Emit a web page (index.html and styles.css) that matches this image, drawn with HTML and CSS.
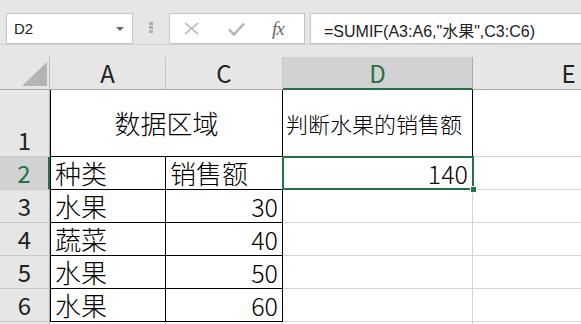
FILE: index.html
```html
<!DOCTYPE html>
<html>
<head>
	<title>SUMIF</title>
	<link rel="stylesheet" href="styles.css">
</head>
<body>
	<div class="toolbar">
		<div class="namebox">
			<span>D2</span>
			<span class="caret"></span>
		</div>
		<div class="grip"><i></i><i></i><i></i></div>
		<div class="fxbox">
			<svg class="ico" width="15" height="13" viewBox="0 0 15 13">
				<path d="M1 1 L14 12 M14 1 L1 12" stroke="#b3b3b3" stroke-width="1.6" fill="none"/>
			</svg>
			<svg class="ico ok" width="17" height="14" viewBox="0 0 17 14">
				<path d="M1 7.5 L6 12.5 L16 1.5" stroke="#b3b3b3" stroke-width="2.4" fill="none"/>
			</svg>
			<span class="fx">fx</span>
		</div>
		<div class="formula">=SUMIF(A3:A6,"水果",C3:C6)</div>
	</div>

	<div class="sheet">
		<div class="gap"></div>

		<div class="corner">
			<svg width="25" height="24" viewBox="0 0 25 24"><polygon points="0,24 25,0 25,24" fill="#b4b4b4"/></svg>
		</div>
		<div class="colhead">A</div>
		<div class="colhead">C</div>
		<div class="colhead sel">D</div>
		<div class="colhead">E</div>

		<div class="rowhead bottom">1</div>
		<div class="cell b first span center big">数据区域</div>
		<div class="cell b small">判断水果的销售额</div>
		<div class="cell"></div>

		<div class="rowhead sel">2</div>
		<div class="cell b first">种类</div>
		<div class="cell b">销售额</div>
		<div class="cell b num active">140
			<div class="pick"><span class="handle"></span></div>
		</div>
		<div class="cell"></div>

		<div class="rowhead">3</div>
		<div class="cell b first">水果</div>
		<div class="cell b num">30</div>
		<div class="cell"></div>
		<div class="cell"></div>

		<div class="rowhead">4</div>
		<div class="cell b first">蔬菜</div>
		<div class="cell b num">40</div>
		<div class="cell"></div>
		<div class="cell"></div>

		<div class="rowhead">5</div>
		<div class="cell b first">水果</div>
		<div class="cell b num">50</div>
		<div class="cell"></div>
		<div class="cell"></div>

		<div class="rowhead">6</div>
		<div class="cell b first">水果</div>
		<div class="cell b num">60</div>
		<div class="cell"></div>
		<div class="cell"></div>

		<div class="rowhead"></div>
		<div class="cell"></div>
		<div class="cell"></div>
		<div class="cell"></div>
		<div class="cell"></div>
	</div>
</body>
</html>
```

FILE: styles.css
```css
body {
	margin: 0;
	width: 581px;
	height: 324px;
	overflow: hidden;
	background-color: #fff;
	font-family: "Noto Sans CJK SC", sans-serif;
	color: #000;
}

/* formula bar */

.toolbar {
	display: flex;
	align-items: flex-start;
	height: 31px;
	padding: 13px 0 0 6px;
	background-color: #e6e6e6;
	border-bottom: 1px solid #d0d0d0;
}

.namebox {
	display: flex;
	align-items: center;
	justify-content: space-between;
	width: 127px;
	height: 31px;
	box-sizing: border-box;
	padding: 0 8px 0 7px;
	background-color: #fff;
	border: 1px solid #c6c6c6;
	font-family: "Liberation Sans", sans-serif;
	font-size: 15px;
	color: #222;
}

.caret {
	width: 0;
	height: 0;
	border-left: 4px solid transparent;
	border-right: 4px solid transparent;
	border-top: 4px solid #666;
}

.grip {
	display: flex;
	flex-direction: column;
	gap: 1px;
	margin: 9px 0 0 16px;
}

.grip i {
	width: 4px;
	height: 3px;
	background-color: #b0b0b0;
}

.fxbox {
	display: flex;
	align-items: center;
	width: 136px;
	height: 31px;
	box-sizing: border-box;
	margin-left: 16px;
	padding-left: 14px;
	background-color: #fff;
	border: 1px solid #c6c6c6;
}

.ico.ok {
	margin-left: 29px;
}

.fx {
	margin-left: 27px;
	font-family: "Liberation Serif", serif;
	font-style: italic;
	font-size: 19px;
	letter-spacing: -1px;
	color: #666;
}

.formula {
	flex: 1;
	height: 31px;
	box-sizing: border-box;
	margin: 0 -2px 0 5px;
	padding: 4px 0 0 13px;
	background-color: #fff;
	border: 1px solid #c6c6c6;
	font-family: "Liberation Sans", "Noto Sans CJK SC", sans-serif;
	font-size: 16px;
	color: #222;
}

/* grid */

.sheet {
	display: grid;
	grid-template-columns: 50px 116px 117px 190px 192px;
	grid-template-rows: 12px 33px 67px repeat(6, 33px);
}

.sheet > * {
	box-sizing: border-box;
}

.gap {
	grid-column: 1 / -1;
	background-color: #e6e6e6;
}

.corner {
	display: flex;
	align-items: flex-end;
	justify-content: flex-end;
	padding: 0 2px 3px 0;
	background-color: #e6e6e6;
	border-right: 1px solid #bdbdbd;
	border-bottom: 1px solid #ababab;
}

.colhead {
	display: flex;
	align-items: center;
	justify-content: center;
	background-color: #e6e6e6;
	border-right: 1px solid #c8c8c8;
	border-bottom: 1px solid #ababab;
	font-size: 24px;
	line-height: 1;
	color: #222;
}

.colhead.sel {
	background-color: #d2d2d2;
	border-right-color: #ababab;
	border-bottom: 2px solid #217346;
	color: #217346;
}

.rowhead {
	display: flex;
	align-items: center;
	justify-content: center;
	background-color: #e6e6e6;
	border-right: 1px solid #ababab;
	border-bottom: 1px solid #c8c8c8;
	font-size: 24px;
	line-height: 1;
	color: #222;
}

.rowhead.bottom {
	align-items: flex-end;
	padding-bottom: 4px;
}

.rowhead.sel {
	background-color: #d2d2d2;
	border-right: 2px solid #217346;
	color: #217346;
}

.cell {
	display: flex;
	align-items: center;
	padding: 0 4px;
	border-right: 1px solid #d4d4d4;
	border-bottom: 1px solid #d4d4d4;
	font-size: 26px;
	font-weight: 300;
	line-height: 1;
	white-space: nowrap;
}

.cell.b {
	border-color: #000;
}

.cell.first {
	border-left: 1px solid #000;
}

.cell.span {
	grid-column: span 2;
}

.cell.center {
	justify-content: center;
}

.cell.small {
	padding-left: 3px;
	font-size: 22px;
}

.cell.num {
	justify-content: flex-end;
	font-size: 25px;
}

.cell.active {
	position: relative;
}

.pick {
	position: absolute;
	left: -1px;
	top: -1px;
	right: -2px;
	bottom: -1px;
	border: 2px solid #217346;
}

.handle {
	position: absolute;
	right: -5px;
	bottom: -5px;
	width: 5px;
	height: 5px;
	background-color: #217346;
	border: 1px solid #fff;
}
```
